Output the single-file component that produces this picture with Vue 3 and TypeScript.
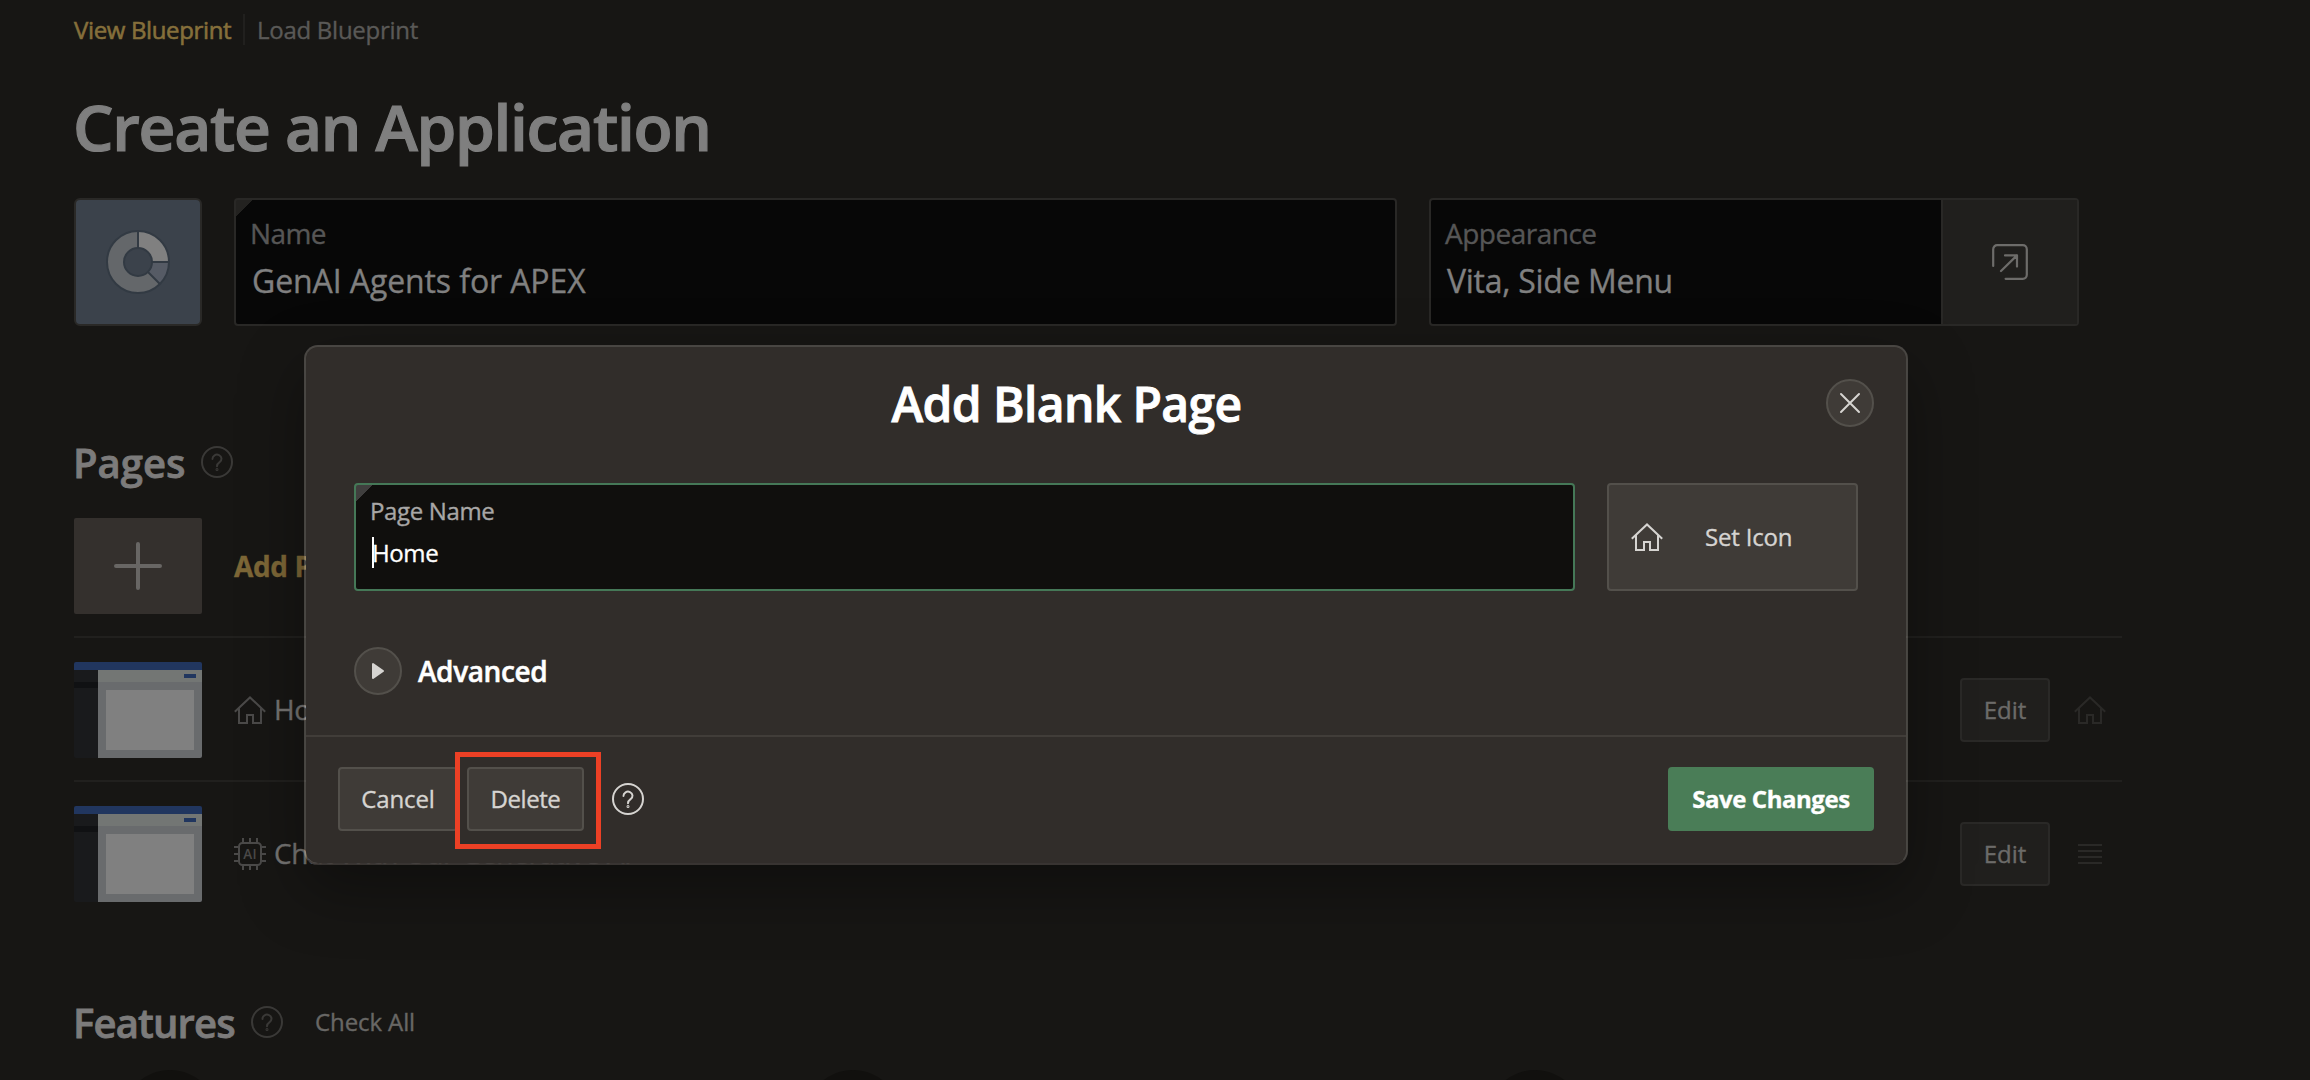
<script setup lang="ts">
import { ref } from 'vue'

interface PageRow {
  name: string
  icon: 'home' | 'ai'
  tail: 'home' | 'drag'
}

const appName = ref('GenAI Agents for APEX')
const appearance = ref('Vita, Side Menu')
const pages = ref<PageRow[]>([
  { name: 'Home', icon: 'home', tail: 'home' },
  { name: 'Chat With Our Generative AI', icon: 'ai', tail: 'drag' },
])
const pageName = ref('Home')

const HOME = 'M.8 17.8 16 3.4l15.2 14.4M5 14.6V29h8v-8h6v8h8V14.6'
const HELP = 'M11.5 12.9a4.5 4.1 0 1 1 7.1 3.2C16.9 17.3 16 18 16 20.3'
const CHIP_PINS =
  'M9 0v4M16 0v4M23 0v4M9 28v4M16 28v4M23 28v4M0 9h4M0 16h4M0 23h4M28 9h4M28 16h4M28 23h4'
</script>

<template>
  <div class="screen">
    <main class="page">
      <nav class="tabs">
        <a class="tab active">View Blueprint</a>
        <i class="tab-sep"></i>
        <a class="tab load">Load Blueprint</a>
      </nav>

      <h1 class="title">Create an Application</h1>

      <section class="app-row">
        <div class="app-icon">
          <svg width="64" height="64" viewBox="0 0 64 64">
            <path d="M32 32V1A31 31 0 1 0 53.92 53.92Z" fill="#64676a" />
            <path d="M32 32H63A31 31 0 0 1 53.92 53.92Z" fill="#565b65" />
            <path d="M32 32V1A31 31 0 0 1 63 32Z" fill="#808080" />
            <path d="M32 32V1M32 32H63M32 32 53.92 53.92" stroke="#323a43" stroke-width="2" />
            <circle cx="32" cy="32" r="31" fill="none" stroke="#323a43" stroke-width="2" />
            <circle cx="32" cy="32" r="14" fill="#3b424b" stroke="#323a43" stroke-width="2" />
          </svg>
        </div>
        <div class="field name-field">
          <span class="field-label">Name</span>
          <span class="field-value">{{ appName }}</span>
        </div>
        <div class="field look-field">
          <div class="look-text">
            <span class="field-label">Appearance</span>
            <span class="field-value">{{ appearance }}</span>
          </div>
          <button class="look-btn">
            <svg width="36" height="36" viewBox="0 0 36 36" fill="none" stroke="#6d6c6a" stroke-width="2.2" stroke-linecap="round" stroke-linejoin="round">
              <path d="M1.2 22V5.2a4 4 0 0 1 4-4h25.6a4 4 0 0 1 4 4v25.6a4 4 0 0 1-4 4H13.6M9 27 25 11.4M13 11.4h12v11.2" />
            </svg>
          </button>
        </div>
      </section>

      <header class="section-head pages-head">
        <h2 class="section-title pages-title">Pages</h2>
        <svg class="help" width="32" height="32" viewBox="0 0 32 32" fill="none" stroke="currentColor" stroke-width="2" stroke-linecap="round">
          <circle cx="16" cy="16" r="15" /><path :d="HELP" /><circle cx="16" cy="23.6" r=".5" />
        </svg>
      </header>

      <section class="rows">
        <div class="row">
          <div class="add-tile">
            <svg width="48" height="48" viewBox="0 0 48 48" stroke="#686664" stroke-width="4" stroke-linecap="round">
              <path d="M24 2v44M2 24h44" />
            </svg>
          </div>
          <a class="add-link">Add Page</a>
        </div>
        <div v-for="p in pages" :key="p.name" class="row">
          <svg class="thumb" width="128" height="96" viewBox="0 0 128 96" shape-rendering="crispEdges">
            <rect width="128" height="96" fill="#191a1c" />
            <rect width="128" height="8" fill="#21365f" />
            <rect y="20" width="24" height="6" fill="#101113" />
            <rect x="24" y="8" width="104" height="12" fill="#737674" />
            <rect x="110" y="12" width="12" height="4" fill="#21365f" />
            <rect x="24" y="20" width="104" height="76" fill="#696b6d" />
            <rect x="32" y="28" width="88" height="60" fill="#808080" />
          </svg>
          <svg v-if="p.icon === 'home'" class="row-icon" width="32" height="32" viewBox="0 0 32 32" fill="none" stroke="currentColor" stroke-width="2">
            <path :d="HOME" />
          </svg>
          <svg v-else class="row-icon" width="32" height="32" viewBox="0 0 32 32" fill="none" stroke="currentColor" stroke-width="2">
            <rect x="5" y="5" width="22" height="22" rx="3.5" />
            <path :d="CHIP_PINS" />
            <text class="chip-text" x="16" y="21" text-anchor="middle">AI</text>
          </svg>
          <span class="row-name">{{ p.name }}</span>
          <button class="edit">Edit</button>
          <svg class="tail" width="32" height="32" viewBox="0 0 32 32" fill="none" stroke="currentColor" stroke-width="2">
            <path :d="p.tail === 'home' ? HOME : 'M4 7h24M4 13h24M4 19h24M4 25h24'" />
          </svg>
        </div>
      </section>

      <header class="section-head features-head">
        <h2 class="section-title features-title">Features</h2>
        <svg class="help" width="32" height="32" viewBox="0 0 32 32" fill="none" stroke="currentColor" stroke-width="2" stroke-linecap="round">
          <circle cx="16" cy="16" r="15" /><path :d="HELP" /><circle cx="16" cy="23.6" r=".5" />
        </svg>
        <a class="check-all">Check All</a>
      </header>
      <section class="features">
        <i v-for="n in 3" :key="n" class="feature-dot"></i>
      </section>
    </main>

    <div class="dialog" role="dialog">
      <header class="dialog-head">
        <h2 class="dialog-title">Add Blank Page</h2>
        <button class="round-btn">
          <svg width="22" height="22" viewBox="0 0 22 22" stroke="#d6d4d1" stroke-width="2" stroke-linecap="round">
            <path d="M2 2 20 20M20 2 2 20" />
          </svg>
        </button>
      </header>
      <div class="dialog-body">
        <div class="form-row">
          <div class="page-field">
            <span class="page-label">Page Name</span>
            <span class="page-value"><i class="caret"></i>{{ pageName }}</span>
          </div>
          <button class="icon-btn">
            <svg width="32" height="32" viewBox="0 0 32 32" fill="none" stroke="#d6d4d1" stroke-width="2">
              <path :d="HOME" />
            </svg>
            <span>Set Icon</span>
          </button>
        </div>
        <div class="advanced">
          <button class="round-btn">
            <svg width="14" height="18" viewBox="0 0 14 18"><path d="M2 2v14L12 9Z" fill="#d6d4d1" stroke="#d6d4d1" stroke-width="2" stroke-linejoin="round" /></svg>
          </button>
          <span class="advanced-label">Advanced</span>
        </div>
      </div>
      <footer class="dialog-foot">
        <button class="btn cancel">Cancel</button>
        <button class="btn delete">Delete</button>
        <svg class="foot-help" width="32" height="32" viewBox="0 0 32 32" fill="none" stroke="#d6d4d1" stroke-width="2" stroke-linecap="round">
          <circle cx="16" cy="16" r="15" /><path :d="HELP" /><circle cx="16" cy="23.6" r=".5" />
        </svg>
        <button class="btn save">Save Changes</button>
        <i class="marker"></i>
      </footer>
    </div>
  </div>
</template>

<style>
body { margin: 0; background: #171614; }
</style>

<style scoped>
* { box-sizing: border-box; }
.screen {
  position: relative;
  width: 2310px;
  height: 1080px;
  overflow: hidden;
  background: #171614;
  font-family: "Open Sans", "Noto Sans", sans-serif;
  font-size: 24px;
  white-space: nowrap;
  -webkit-text-stroke: .35px currentColor;
}
h1, h2 { margin: 0; }
svg { display: block; flex: none; }
button { font: inherit; color: inherit; padding: 0; margin: 0; }

.page { width: 2122px; padding: 14px 0 0 74px; }
.tabs { display: flex; height: 31px; line-height: 31px; }
.tab { color: #5a5957; letter-spacing: -.27px; }
.tab.active { width: 168px; color: #856f3b; letter-spacing: -.36px; -webkit-text-stroke-width: .6px; }
.tab-sep { width: 2px; margin-left: 1px; background: #21201e; }
.tab.load { margin-left: 12px; }
.title {
  margin-top: 50px;
  margin-left: -1px;
  font-size: 64px;
  line-height: 64px;
  font-weight: 600;
  letter-spacing: -1.3px;
  color: #7f7f7f;
  -webkit-text-stroke-width: 1.2px;
}

.app-row { display: flex; margin-top: 39px; height: 128px; }
.app-icon {
  display: flex;
  align-items: center;
  justify-content: center;
  width: 128px;
  border: 2px solid #2a2927;
  border-radius: 6px;
  background: #3b424b;
}
.field {
  display: flex;
  margin-left: 32px;
  border: 2px solid #292826;
  border-radius: 4px;
  background: #070707;
}
.name-field {
  flex-direction: column;
  width: 1163px;
  padding: 14px 0 0 14px;
  background: linear-gradient(135deg, #232220 11.4px, transparent 11.8px) #070707;
}
.field-label { font-size: 28px; line-height: 38px; color: #565656; letter-spacing: -.6px; }
.field-value { margin: 7px 0 0 2px; font-size: 32px; line-height: 44px; color: #808080; letter-spacing: -.1px; }
.look-field { width: 650px; }
.look-text { display: flex; flex: 1; flex-direction: column; padding: 14px 0 0 14px; }
.look-text .field-label { letter-spacing: -.5px; }
.look-text .field-value { margin-left: 2px; letter-spacing: -.3px; }
.look-btn {
  display: flex;
  align-items: center;
  justify-content: center;
  width: 136px;
  border: 0;
  border-left: 2px solid #292826;
  background: #201f1d;
}

.section-head { display: flex; align-items: center; height: 48px; }
.pages-head { margin-top: 112px; }
.features-head { margin-top: 72px; }
.section-title {
  margin-left: -1px;
  font-size: 40px;
  line-height: 49px;
  font-weight: 600;
  color: #7c7b7b;
  -webkit-text-stroke-width: .8px;
}
.pages-title { width: 128px; }
.features-title { width: 178px; letter-spacing: -.85px; }
.help { color: #3a3937; }
.check-all { margin-left: 32px; padding-bottom: 2px; color: #686765; letter-spacing: -.1px; }

.rows { margin-top: 8px; }
.row { display: flex; align-items: center; height: 144px; padding: 24px 0 22px; border-bottom: 2px solid #21201e; }
.row:last-child { border-bottom-color: transparent; }
.add-tile {
  display: flex;
  align-items: center;
  justify-content: center;
  width: 128px;
  height: 96px;
  border-radius: 2px;
  background: #34302d;
}
.add-link { margin-left: 32px; font-size: 28px; font-weight: 700; color: #7d6737; letter-spacing: -.4px; }
.thumb { border-radius: 2px; }
.row-icon { margin-left: 32px; color: #4b4a49; }
.chip-text { font-size: 13.5px; font-weight: 600; fill: currentColor; stroke: none; letter-spacing: .3px; }
.row-name { margin-left: 8px; padding-bottom: 2px; font-size: 28px; color: #757473; letter-spacing: -.4px; }
.edit {
  width: 90px;
  height: 64px;
  margin-left: auto;
  padding-bottom: 2px;
  border: 2px solid #2a2927;
  border-radius: 4px;
  background: #201f1d;
  color: #6c6b69;
}
.tail { margin: 0 16px 0 24px; color: #2a2927; }

.features { display: grid; grid-template-columns: repeat(3, 1fr); margin-top: 24px; padding: 0; }
.feature-dot { width: 96px; height: 96px; margin-left: 48px; border-radius: 50%; background: #11100e; }

.dialog {
  position: absolute;
  left: 304px;
  top: 345px;
  width: 1604px;
  height: 520px;
  border: 2px solid rgba(255, 248, 240, .22);
  border-bottom-color: rgba(62, 58, 55, .88);
  border-radius: 14px;
  background: #312d2a;
  background-clip: padding-box;
  box-shadow: 0 24px 64px rgba(0, 0, 0, .35);
}
.dialog-head { display: flex; align-items: center; gap: 31px; height: 112px; padding: 0 32px; }
.dialog-title {
  flex: 1;
  text-align: center;
  font-size: 48px;
  font-weight: 600;
  color: #fff;
  letter-spacing: -.62px;
  -webkit-text-stroke-width: .9px;
}
.round-btn {
  display: flex;
  align-items: center;
  justify-content: center;
  width: 48px;
  height: 48px;
  border: 2px solid #53504b;
  border-radius: 50%;
  background: #3f3b37;
}
.dialog-body { padding: 24px 48px 40px; }
.form-row { display: flex; gap: 32px; height: 108px; }
.page-field {
  display: flex;
  flex: 1;
  flex-direction: column;
  padding: 10px 0 0 14px;
  border: 2px solid #457857;
  border-radius: 4px;
  background: linear-gradient(135deg, #403f3e 11.4px, transparent 11.8px) #100f0d;
}
.page-label { line-height: 32px; color: #a8a7a6; letter-spacing: -.35px; }
.page-value { position: relative; margin: 10px 0 0 2px; line-height: 32px; color: #fff; letter-spacing: -.4px; }
.caret { position: absolute; left: 0; top: 0; width: 2px; height: 31px; background: #fff; }
.icon-btn {
  display: flex;
  align-items: center;
  width: 251px;
  padding-left: 22px;
  border: 2px solid #53504b;
  border-radius: 4px;
  background: #3f3b37;
  color: #d6d4d1;
}
.icon-btn span { margin-left: 42px; padding-bottom: 2px; letter-spacing: -.2px; }
.advanced { display: flex; align-items: center; gap: 16px; margin-top: 56px; }
.advanced-label { font-size: 28px; line-height: 40px; font-weight: 600; color: #fff; letter-spacing: -.4px; -webkit-text-stroke-width: .5px; }
.dialog-foot {
  position: relative;
  display: flex;
  align-items: center;
  height: 128px;
  padding: 0 32px 2px;
  border-top: 2px solid #413d39;
}
.btn { height: 64px; padding-bottom: 2px; border: 2px solid #53504b; border-radius: 4px; background: #3f3b37; color: #d6d4d1; }
.cancel { width: 120px; letter-spacing: -.15px; }
.delete { width: 117px; margin-left: 9px; letter-spacing: -.45px; }
.foot-help { margin-left: 28px; }
.save { width: 206px; margin-left: auto; border: 0; background: #4a7d57; color: #fff; font-weight: 700; letter-spacing: -.45px; }
.marker { position: absolute; left: 149px; top: 15px; width: 146px; height: 97px; border: 5px solid #ec4025; }
</style>
